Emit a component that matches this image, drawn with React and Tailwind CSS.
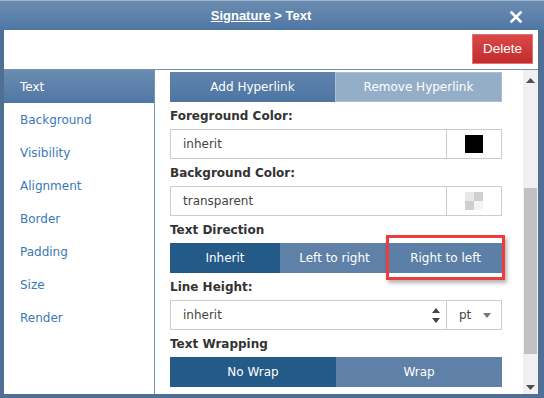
const font = { fontFamily: '"DejaVu Sans", Verdana, sans-serif' };
const titleFont = { fontFamily: '"Liberation Sans", Arial, sans-serif' };

const menu = ["Text", "Background", "Visibility", "Alignment", "Border", "Padding", "Size", "Render"];

function Label({ children }) {
   return <div className="h-[27px] flex items-center text-[12px] font-bold text-[#333]">{children}</div>;
}

function ColorField({ value, swatch }) {
   return (
      <div className="h-[30px] flex border border-[#ccc] bg-white">
         <div className="flex-1 flex items-center pl-[12px] text-[12px] text-[#444]">{value}</div>
         <div className="w-[55px] border-l border-[#ccc] flex items-center justify-center">{swatch}</div>
      </div>
   );
}

export default function App() {
   return (
      <div style={font} className="w-[544px] h-[398px] bg-[#4f6f95] flex flex-col overflow-hidden">
         {/* Title bar */}
         <div className="h-[30px] shrink-0 border-t border-[#9fb5cc] bg-gradient-to-b from-[#6b8cb1] to-[#4f77a4] flex items-center justify-center pr-[22px] relative text-white">
            <div style={titleFont} className="text-[13px] font-bold">
               <span className="underline">Signature</span> &gt; Text
            </div>
            <svg className="absolute left-[509px] top-[9px]" width="14" height="14" viewBox="0 0 14 14">
               <path d="M2.5 2.5 L11.5 11.5 M11.5 2.5 L2.5 11.5" stroke="white" strokeWidth="2.6" strokeLinecap="square" />
            </svg>
         </div>

         <div className="flex-1 flex flex-col ml-[4px] mr-[6px] mb-[4px] bg-white">
            {/* Toolbar */}
            <div className="h-[40px] shrink-0 flex items-center justify-end pr-[5px] border-b border-[#7393b6]">
               <button
                  style={titleFont}
                  className="h-[30px] w-[61px] mb-[1px] bg-gradient-to-b from-[#d94848] to-[#c22b2b] border border-[#e57373] text-white text-[13.5px]"
               >
                  Delete
               </button>
            </div>

            <div className="flex-1 flex min-h-0">
               {/* Sidebar */}
               <div className="w-[151px] shrink-0 border-r border-[#7393b6]">
                  {menu.map((m, i) => (
                     <div
                        key={m}
                        className={
                           i === 0
                              ? "h-[33px] flex items-center pl-[16px] text-[12px] text-white bg-gradient-to-b from-[#6b8cb1] to-[#4f77a4]"
                              : "h-[33px] flex items-center pl-[16px] text-[12px] text-[#3a78b8]"
                        }
                     >
                        {m}
                     </div>
                  ))}
               </div>

               {/* Content */}
               <div className="flex-1 relative pl-[15px] pr-[21px] pt-[2px]">
                  <div className="flex h-[30px] text-[12px] text-white">
                     <div className="flex-1 flex items-center justify-center bg-gradient-to-b from-[#6184ad] to-[#4d75a2]">Add Hyperlink</div>
                     <div className="flex-1 flex items-center justify-center bg-[#94aec7] border border-[#a9bfd3]">Remove Hyperlink</div>
                  </div>

                  <Label>Foreground Color:</Label>
                  <ColorField value="inherit" swatch={<div className="w-[18px] h-[18px] bg-black" />} />

                  <Label>Background Color:</Label>
                  <ColorField
                     value="transparent"
                     swatch={
                        <div className="w-[18px] h-[18px] grid grid-cols-2">
                           <div className="bg-[#e8e8e8]" />
                           <div className="bg-[#cfcfcf]" />
                           <div className="bg-[#cfcfcf]" />
                           <div className="bg-[#f4f4f4]" />
                        </div>
                     }
                  />

                  <Label>Text Direction</Label>
                  <div className="flex h-[30px] text-[12px] text-white">
                     <div className="w-[110px] flex items-center justify-center bg-[#245a88]">Inherit</div>
                     <div className="w-[109px] flex items-center justify-center bg-[#5f81a8]">Left to right</div>
                     <div className="flex-1 flex items-center justify-center bg-[#5c7fa7]">Right to left</div>
                  </div>

                  <Label>Line Height:</Label>
                  <div className="h-[30px] flex border border-[#ccc] bg-white">
                     <div className="flex-1 flex items-center pl-[12px] text-[12px] text-[#444]">inherit</div>
                     <div className="w-[12px] flex flex-col items-center justify-center gap-[5px] mr-[4px]">
                        <svg width="8" height="5" viewBox="0 0 8 5"><path d="M0 5 L4 0 L8 5 Z" fill="#444" /></svg>
                        <svg width="8" height="5" viewBox="0 0 8 5"><path d="M0 0 L4 5 L8 0 Z" fill="#444" /></svg>
                     </div>
                     <div className="w-[55px] border-l border-[#ccc] flex items-center justify-between pl-[12px] pr-[10px] text-[12px] text-[#444]">
                        <span>pt</span>
                        <svg width="8" height="5" viewBox="0 0 8 5"><path d="M0 0 L4 5 L8 0 Z" fill="#777" /></svg>
                     </div>
                  </div>

                  <Label>Text Wrapping</Label>
                  <div className="flex h-[30px] text-[12px] text-white">
                     <div className="flex-1 flex items-center justify-center bg-[#245a88]">No Wrap</div>
                     <div className="flex-1 flex items-center justify-center bg-[#5f81a8]">Wrap</div>
                  </div>

                  {/* highlight on "Right to left" */}
                  <div className="absolute left-[231px] top-[165px] w-[119px] h-[45px] border-[3px] border-[#ee3b3b] shadow-[2px_3px_4px_rgba(0,0,0,0.3)]" />
               </div>

               {/* Scrollbar */}
               <div className="w-[15px] shrink-0 bg-[#f0f0f0] flex flex-col items-center">
                  <svg className="mt-[8px]" width="9" height="5" viewBox="0 0 9 5"><path d="M0 5 L4.5 0 L9 5 Z" fill="#505050" /></svg>
                  <div className="w-[13px] h-[166px] mt-[105px] bg-[#c1c1c1]" />
                  <div className="flex-1" />
                  <svg className="mb-[4px]" width="9" height="5" viewBox="0 0 9 5"><path d="M0 0 L4.5 5 L9 0 Z" fill="#505050" /></svg>
               </div>
            </div>
         </div>
      </div>
   );
}
